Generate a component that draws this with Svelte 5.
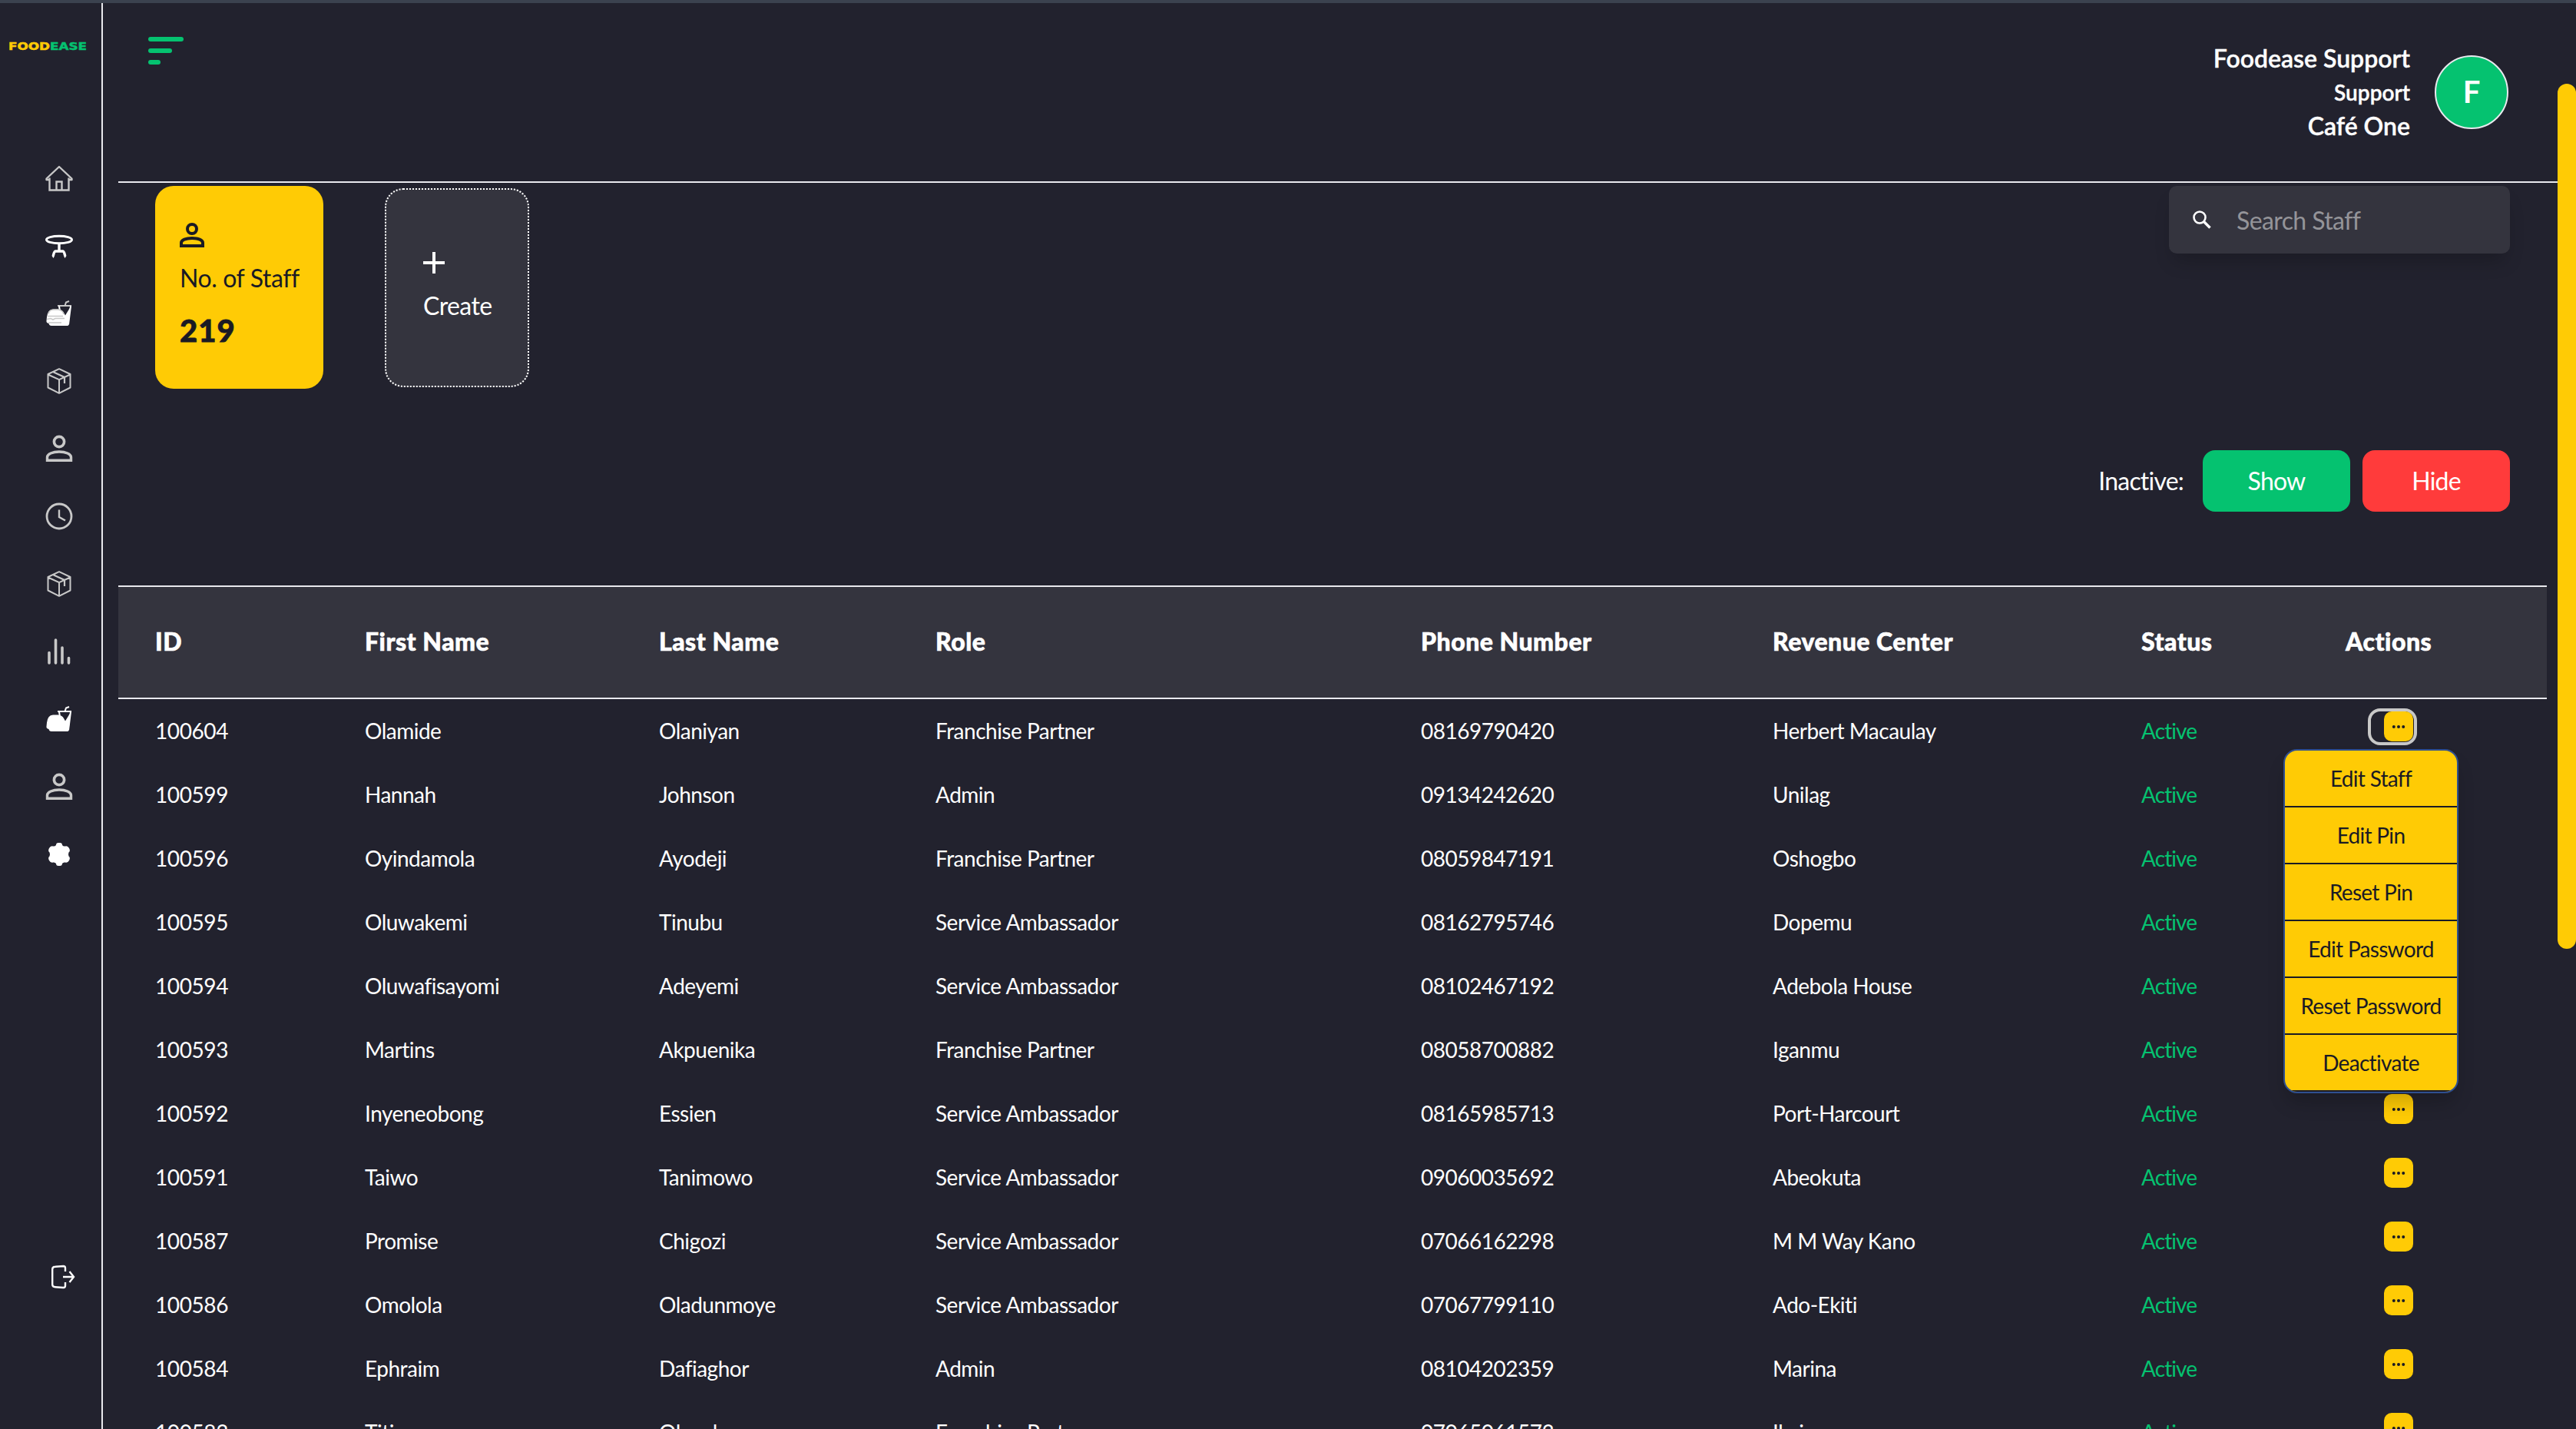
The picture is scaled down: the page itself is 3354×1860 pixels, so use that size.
<script lang="ts">
  interface Staff {
    id: string;
    first: string;
    last: string;
    role: string;
    phone: string;
    center: string;
  }

  const nav = [
    'home', 'table', 'meal', 'box', 'person', 'clock',
    'box', 'stats', 'mealSolid', 'person', 'settings'
  ];

  const staff: Staff[] = [
    { id: '100604', first: 'Olamide', last: 'Olaniyan', role: 'Franchise Partner', phone: '08169790420', center: 'Herbert Macaulay' },
    { id: '100599', first: 'Hannah', last: 'Johnson', role: 'Admin', phone: '09134242620', center: 'Unilag' },
    { id: '100596', first: 'Oyindamola', last: 'Ayodeji', role: 'Franchise Partner', phone: '08059847191', center: 'Oshogbo' },
    { id: '100595', first: 'Oluwakemi', last: 'Tinubu', role: 'Service Ambassador', phone: '08162795746', center: 'Dopemu' },
    { id: '100594', first: 'Oluwafisayomi', last: 'Adeyemi', role: 'Service Ambassador', phone: '08102467192', center: 'Adebola House' },
    { id: '100593', first: 'Martins', last: 'Akpuenika', role: 'Franchise Partner', phone: '08058700882', center: 'Iganmu' },
    { id: '100592', first: 'Inyeneobong', last: 'Essien', role: 'Service Ambassador', phone: '08165985713', center: 'Port-Harcourt' },
    { id: '100591', first: 'Taiwo', last: 'Tanimowo', role: 'Service Ambassador', phone: '09060035692', center: 'Abeokuta' },
    { id: '100587', first: 'Promise', last: 'Chigozi', role: 'Service Ambassador', phone: '07066162298', center: 'M M Way Kano' },
    { id: '100586', first: 'Omolola', last: 'Oladunmoye', role: 'Service Ambassador', phone: '07067799110', center: 'Ado-Ekiti' },
    { id: '100584', first: 'Ephraim', last: 'Dafiaghor', role: 'Admin', phone: '08104202359', center: 'Marina' },
    { id: '100583', first: 'Titi', last: 'Olusola', role: 'Franchise Partner', phone: '07065061573', center: 'Ikeja' }
  ];

  const menu = ['Edit Staff', 'Edit Pin', 'Reset Pin', 'Edit Password', 'Reset Password', 'Deactivate'];

  let openId = $state('100604');

  function toggle(id: string) {
    openId = openId === id ? '' : id;
  }
</script>

{#snippet icon(name: string)}
  <svg class="icon" viewBox="0 0 36 36" fill="none" stroke="#c8c8c8" stroke-width="2.4">
    {#if name === 'home'}
      <path d="M5.5 17.5V33.5h25V17.5" stroke-width="2.4" />
      <path d="M5 20H1.5v-1.500L18 3l16.500 15.500V20H31" stroke-width="2.4" stroke-linejoin="round" />
      <path d="M14.500 33V22.500h7V33" stroke-width="2.400" />
    {:else if name === 'table'}
      <g stroke="#fff">
        <ellipse cx="18" cy="10" rx="16.500" ry="4.800" stroke-width="3" />
        <path d="M18 15v9M9.500 32.500c1.500-1 1-7.500 4-7.500h9c3 0 2.500 6.500 4 7.500" stroke-width="3.400" />
      </g>
    {:else if name === 'meal' || name === 'mealSolid'}
      <path d="M16 8h18M25.500 8l1.500-4.500 4-1.500" stroke={name === 'meal' ? '#c8c8c8' : '#fff'} stroke-width="2" />
      <path d="M18 8.500l.8 5M33 8.500L30 32.500" stroke="#fff" stroke-width="2" />
      <path d="M33 9L30.500 32.500Q30.300 34 28.500 34H8Q5 34 4.500 31Q1 30 1.500 27.500L2 22.500Q3 13 10 12.500h7Q22 13 24 17l2 3.500z" fill="#fff" stroke="none" />
      {#if name === 'meal'}
        <path d="M3 21.500h20M2 25.500l5-1 3 1.500 3-1.500h12M4 30h17" stroke-width="1.600" />
        <path d="M4 19Q5 13 11 13h6Q23 14 24 19" stroke-width="1.400" />
      {/if}
    {:else if name === 'box'}
      <path d="M18 2.200L32.500 9v17.500L18 33.800 3.500 26.500V9zM3.500 9.500L18 16.200 32.500 9.500M18 16v17.500" stroke-width="2" stroke-linejoin="round" />
      <path d="M10.500 6.200L25 13v8" stroke-width="2.200" />
    {:else if name === 'person'}
      <circle cx="18" cy="9" r="6.600" stroke-width="3.600" />
      <path d="M2.500 33.200V29c0-4 7-7 15.500-7s15.500 3 15.500 7v4.200z" stroke-width="3.400" />
    {:else if name === 'clock'}
      <circle cx="18" cy="18" r="16" stroke-width="2.800" />
      <path d="M18 9.500V19l8 4.500" stroke-width="2.400" />
    {:else if name === 'stats'}
      <path d="M5 19.500V33M13.500 3v30M22 13v20M30.500 26.500V33" stroke-width="3.600" stroke-linecap="round" />
    {:else if name === 'settings'}
      <path
        d="M14 6Q14 3 17 3h2Q22 3 22 6Q23.500 8 26 7.500Q29 6.500 31 10Q33 13.500 30.500 15.500Q29.500 18 30.500 20.500Q33 22.500 31 26Q29 29.500 26 28.500Q23.500 28 22 30Q22 33 19 33h-2Q14 33 14 30Q12.500 28 10 28.500Q7 29.500 5 26Q3 22.500 5.500 20.500Q6.500 18 5.500 15.500Q3 13.500 5 10Q7 6.500 10 7.500Q12.500 8 14 6z"
        fill="#fff"
        stroke="none"
      />
    {/if}
  </svg>
{/snippet}

<div class="app">
  <aside class="sidebar">
    <div class="logo"><span class="logo-food">FOOD</span><span class="logo-ease">EASE</span></div>
    <nav class="nav">
      {#each nav as name}
        <a class="nav-link" href="#{name}" aria-label={name}>{@render icon(name)}</a>
      {/each}
    </nav>
    <button class="logout" aria-label="Log out">
      <svg width="32" height="32" viewBox="0 0 32 32" fill="none" stroke="#fff" stroke-width="2.400">
        <path d="M19 9V4.500Q19 2 16.500 2L6 2.800Q2.200 3 2.200 6v20q0 3 3.800 3.200l10.500.8Q19 30 19 27.500V23" />
        <path d="M16 16h13M24.500 9L30 16l-5.500 7" />
      </svg>
    </button>
  </aside>

  <div class="main">
    <header class="topbar">
      <button class="burger" aria-label="Toggle menu">
        <span class="bar"></span>
        <span class="bar bar--mid"></span>
        <span class="bar bar--short"></span>
      </button>
      <div class="profile">
        <div class="who">
          <span class="who-name">Foodease Support</span>
          <span class="who-role">Support</span>
          <span class="who-place">Café One</span>
        </div>
        <div class="avatar">F</div>
      </div>
    </header>

    <section class="summary">
      <div class="card">
        <svg width="32" height="32" viewBox="0 0 32 32" fill="none" stroke="#1a1a24" stroke-width="4">
          <circle cx="16" cy="8" r="6" />
          <path d="M2 30v-4c0-3.500 6-6 14-6s14 2.500 14 6v4z" />
        </svg>
        <span class="card-label">No. of Staff</span>
        <strong class="card-count">219</strong>
      </div>
      <button class="create">
        <svg width="28" height="28" viewBox="0 0 28 28" stroke="#fff" stroke-width="4">
          <path d="M14 0v28M0 14h28" />
        </svg>
        <span>Create</span>
      </button>
      <label class="search">
        <svg width="24" height="24" viewBox="0 0 24 24" fill="none" stroke="#fff">
          <circle cx="9" cy="9" r="7.500" stroke-width="2.600" />
          <path d="M14.500 14.500l8 8" stroke-width="3.400" />
        </svg>
        <span>Search Staff</span>
      </label>
    </section>

    <section class="filter">
      <span class="filter-label">Inactive:</span>
      <button class="btn btn--show">Show</button>
      <button class="btn btn--hide">Hide</button>
    </section>

    <div class="table">
      <div class="row row--head">
        <span>ID</span>
        <span>First Name</span>
        <span>Last Name</span>
        <span>Role</span>
        <span>Phone Number</span>
        <span>Revenue Center</span>
        <span>Status</span>
        <span>Actions</span>
      </div>
      {#each staff as person (person.id)}
        <div class="row">
          <span class="id">{person.id}</span>
          <span>{person.first}</span>
          <span>{person.last}</span>
          <span>{person.role}</span>
          <span class="phone">{person.phone}</span>
          <span>{person.center}</span>
          <span class="active">Active</span>
          <div class="actions">
            <button
              class="more"
              class:more--open={openId === person.id}
              aria-label="Actions"
              onclick={() => toggle(person.id)}
            >
              <svg width="38" height="39" viewBox="0 0 38 39">
                <rect width="38" height="39" rx="10" fill="#ffcb05" />
                <g fill="#1a1a24">
                  <circle cx="12.800" cy="20" r="2" />
                  <circle cx="19" cy="20" r="2" />
                  <circle cx="25.200" cy="20" r="2" />
                </g>
              </svg>
            </button>
            {#if openId === person.id}
              <div class="menu">
                {#each menu as item}
                  <button class="menu-item">{item}</button>
                {/each}
              </div>
            {/if}
          </div>
        </div>
      {/each}
    </div>
  </div>

  <div class="scroll"><div class="thumb"></div></div>
</div>

<style>
  :global(body) {
    background: #22222e;
    overflow: hidden;
  }

  .app {
    display: flex;
    box-sizing: border-box;
    height: 1860px;
    border-top: 4px solid #3b424f;
    overflow: hidden;
    background: #22222e;
    color: #fff;
    font-family: Lato, 'Liberation Sans', sans-serif;
    font-size: 28px;
  }

  button {
    padding: 0;
    border: 0;
    background: none;
    color: inherit;
    font: inherit;
    letter-spacing: inherit;
  }

  .sidebar {
    display: flex;
    flex-direction: column;
    box-sizing: border-box;
    flex: none;
    width: 134px;
    border-right: 2px solid #e9e9ee;
  }

  .logo {
    height: 16px;
    padding: 48px 0 0 11px;
    font: bold 14px/16px 'DejaVu Sans', sans-serif;
    transform: scaleX(1.2);
    transform-origin: 11px 0;
    -webkit-text-stroke: 0.5px currentColor;
  }

  .logo-food {
    color: #ffcb05;
  }

  .logo-ease {
    color: #05c270;
  }

  .nav {
    display: flex;
    flex-direction: column;
    gap: 52px;
    padding: 146px 0 0 59px;
  }

  .nav-link,
  .icon {
    display: block;
    width: 36px;
    height: 36px;
  }

  .logout {
    width: 32px;
    height: 32px;
    margin: 516px 0 0 66px;
  }

  .main {
    flex: none;
    width: 3176px;
    margin-left: 20px;
  }

  .topbar {
    display: flex;
    justify-content: space-between;
    box-sizing: border-box;
    height: 234px;
    padding: 44px 64px 0 39px;
    border-bottom: 2px solid #e9e9ee;
  }

  .burger {
    display: flex;
    flex-direction: column;
    gap: 9px;
    height: 36px;
  }

  .bar {
    width: 46px;
    height: 6px;
    border-radius: 3px;
    background: #05c270;
  }

  .bar--mid {
    width: 31px;
  }

  .bar--short {
    width: 16px;
  }

  .profile {
    display: flex;
    gap: 32px;
  }

  .who {
    display: flex;
    flex-direction: column;
    align-items: flex-end;
    font-size: 32px;
    font-weight: 600;
    -webkit-text-stroke: 0.4px currentColor;
  }

  .who-name {
    line-height: 56px;
  }

  .who-role {
    font-size: 28px;
    line-height: 32px;
  }

  .who-place {
    line-height: 56px;
  }

  .avatar {
    box-sizing: border-box;
    width: 96px;
    height: 96px;
    margin-top: 24px;
    border: 2px solid #e9e9ee;
    border-radius: 50%;
    background: #05c270;
    font-size: 40px;
    font-weight: 700;
    line-height: 90px;
    text-align: center;
  }

  .summary {
    display: flex;
    align-items: flex-start;
    padding: 4px 62px 0 48px;
    font-size: 32px;
    letter-spacing: -0.6px;
  }

  .card {
    display: flex;
    flex-direction: column;
    box-sizing: border-box;
    width: 219px;
    height: 264px;
    padding: 48px 32px 0;
    border-radius: 24px;
    background: #ffcb05;
    color: #1a1a24;
  }

  .card-label {
    margin-top: 16px;
    line-height: 48px;
    letter-spacing: -0.4px;
    white-space: nowrap;
  }

  .card-count {
    margin-top: 14px;
    font-size: 40px;
    font-weight: 900;
    line-height: 60px;
    letter-spacing: 1px;
    -webkit-text-stroke: 0.8px currentColor;
  }

  .create {
    display: flex;
    flex-direction: column;
    align-items: flex-start;
    box-sizing: border-box;
    width: 188px;
    height: 259px;
    margin: 3px 0 0 80px;
    padding: 81px 0 0 48px;
    border: 2px dotted #fff;
    border-radius: 24px;
    background: #34343e;
  }

  .create span {
    margin-top: 18px;
    line-height: 48px;
  }

  .search {
    display: flex;
    align-items: center;
    gap: 33px;
    box-sizing: border-box;
    width: 444px;
    height: 88px;
    margin-left: auto;
    padding-left: 31px;
    border-radius: 10px;
    background: #34343e;
    box-shadow: 0 16px 24px -6px rgba(0, 0, 0, 0.2);
    color: #949499;
  }

  .filter {
    display: flex;
    gap: 16px;
    padding: 80px 62px 0 0;
    justify-content: flex-end;
    font-size: 32px;
    line-height: 80px;
    letter-spacing: -0.8px;
  }

  .filter-label {
    margin-right: 9px;
  }

  .btn {
    width: 192px;
    height: 80px;
    border-radius: 16px;
    line-height: 80px;
  }

  .btn--show {
    background: #05c270;
  }

  .btn--hide {
    background: #ff3b3b;
  }

  .table {
    width: 3162px;
    margin-top: 96px;
  }

  .row {
    display: grid;
    grid-template-columns: 273px 383px 360px 632px 458px 480px 266px 214px;
    box-sizing: border-box;
    height: 83px;
    padding-left: 48px;
    line-height: 82px;
    letter-spacing: -0.5px;
    white-space: nowrap;
  }

  .row--head {
    height: 148px;
    border-top: 2px solid #e9e9ee;
    border-bottom: 2px solid #e9e9ee;
    background: #34343e;
    font-size: 32px;
    font-weight: 900;
    line-height: 142px;
    letter-spacing: 0.5px;
    -webkit-text-stroke: 0.6px currentColor;
  }

  .id {
    letter-spacing: -0.4px;
  }

  .active {
    color: #05c270;
    letter-spacing: -0.9px;
  }

  .actions {
    position: relative;
    padding: 12px 0 0 29px;
  }

  .more {
    display: flex;
    justify-content: flex-end;
    box-sizing: border-box;
    width: 64px;
    height: 48px;
    padding: 4px 5px 0 0;
    border-radius: 16px;
  }

  .more--open {
    box-shadow: inset 0 0 0 4px #c8c8c8;
  }

  .menu {
    position: absolute;
    z-index: 1;
    top: 65px;
    left: -81px;
    box-sizing: border-box;
    width: 228px;
    border: 2px solid #2f4f8f;
    border-radius: 18px;
    overflow: hidden;
    background: #ffcb05;
    box-shadow: 0 16px 24px -4px rgba(0, 0, 0, 0.2);
    color: #1a1a24;
    letter-spacing: -0.7px;
  }

  .menu-item {
    display: block;
    box-sizing: border-box;
    width: 100%;
    height: 74px;
    border-bottom: 2px solid #1a1a24;
    line-height: 68px;
    text-align: center;
  }

  .scroll {
    flex: none;
    width: 24px;
    padding-top: 105px;
  }

  .thumb {
    height: 1126px;
    border-radius: 12px;
    background: #ffcb05;
  }
</style>
